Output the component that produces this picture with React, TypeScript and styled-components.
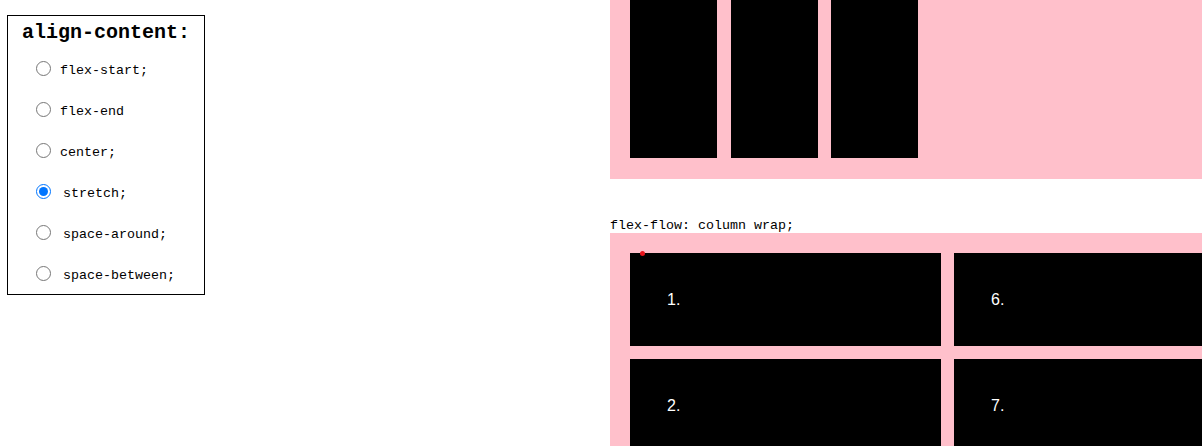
import React from "react";
import styled, { createGlobalStyle } from "styled-components";

const Global = createGlobalStyle`
  html, body { margin: 0; padding: 0; background: #fff; overflow: hidden; }
  body { width: 1202px; height: 446px; }
`;

const Page = styled.div`
  display: flex;
  align-items: flex-start;
  width: 1202px;
  height: 446px;
  overflow: hidden;
`;

const Side = styled.div`
  width: 610px;
  flex: none;
  padding: 15px 0 0 7px;
  box-sizing: border-box;
`;

const Panel = styled.form`
  width: 198px;
  box-sizing: border-box;
  border: 1px solid #000;
  font-family: "Liberation Mono", "DejaVu Sans Mono", monospace;
  color: #000;
`;

const Title = styled.div`
  height: 32px;
  box-sizing: border-box;
  padding-top: 5px;
  text-align: center;
  font-size: 20px;
  font-weight: bold;
  line-height: 24px;
`;

const Row = styled.label`
  display: flex;
  align-items: center;
  height: 41px;
  font-size: 13.33px;
`;

const Radio = styled.input`
  width: 15px;
  height: 15px;
  margin: 0 0 0 28px;
  flex: none;
`;

const Label = styled.span<{ $shift?: boolean }>`
  margin-left: ${(p) => (p.$shift ? 12 : 9)}px;
  padding-top: 3px;
`;

const Main = styled.div`
  flex: 1;
  min-width: 0;
  height: 446px;
  overflow: hidden;
`;

const RowBox = styled.div`
  display: flex;
  gap: 13.4px;
  background: pink;
  padding: 0 20px 21px 20px;
`;

const TallItem = styled.div`
  width: 87.2px;
  height: 158px;
  background: #000;
`;

const Caption = styled.div`
  margin-top: 39px;
  font-family: "Liberation Mono", "DejaVu Sans Mono", monospace;
  font-size: 13.33px;
  line-height: 15px;
  height: 15px;
  color: #000;
  white-space: nowrap;
`;

const ColumnBox = styled.div`
  display: grid;
  grid-template-columns: 311px 311px;
  grid-auto-rows: 93px;
  gap: 13px;
  background: pink;
  padding: 20px;
  width: max-content;
  position: relative;
`;

const Item = styled.div`
  display: flex;
  align-items: center;
  padding-left: 37px;
  background: #000;
  color: #fff;
  font-family: "Liberation Sans", Arial, sans-serif;
  font-size: 16px;
`;

const Dot = styled.span`
  position: absolute;
  left: 30px;
  top: 18px;
  width: 5px;
  height: 5px;
  border-radius: 50%;
  background: #e8141c;
  z-index: 1;
`;

const options = [
  { text: "flex-start;", shift: false },
  { text: "flex-end", shift: false },
  { text: "center;", shift: false },
  { text: "stretch;", shift: true, checked: true },
  { text: "space-around;", shift: true },
  { text: "space-between;", shift: true },
];

const order = [1, 6, 2, 7];

export default function App() {
  return (
    <>
      <Global />
      <Page>
        <Side>
          <Panel>
            <Title>align-content:</Title>
            {options.map((o) => (
              <Row key={o.text}>
                <Radio type="radio" name="ac" defaultChecked={!!o.checked} />
                <Label $shift={o.shift}>{o.text}</Label>
              </Row>
            ))}
          </Panel>
        </Side>
        <Main>
          <RowBox>
            <TallItem />
            <TallItem />
            <TallItem />
          </RowBox>
          <Caption>flex-flow: column wrap;</Caption>
          <ColumnBox>
            <Dot />
            {order.map((n) => (
              <Item key={n}>{n}.</Item>
            ))}
          </ColumnBox>
        </Main>
      </Page>
    </>
  );
}
